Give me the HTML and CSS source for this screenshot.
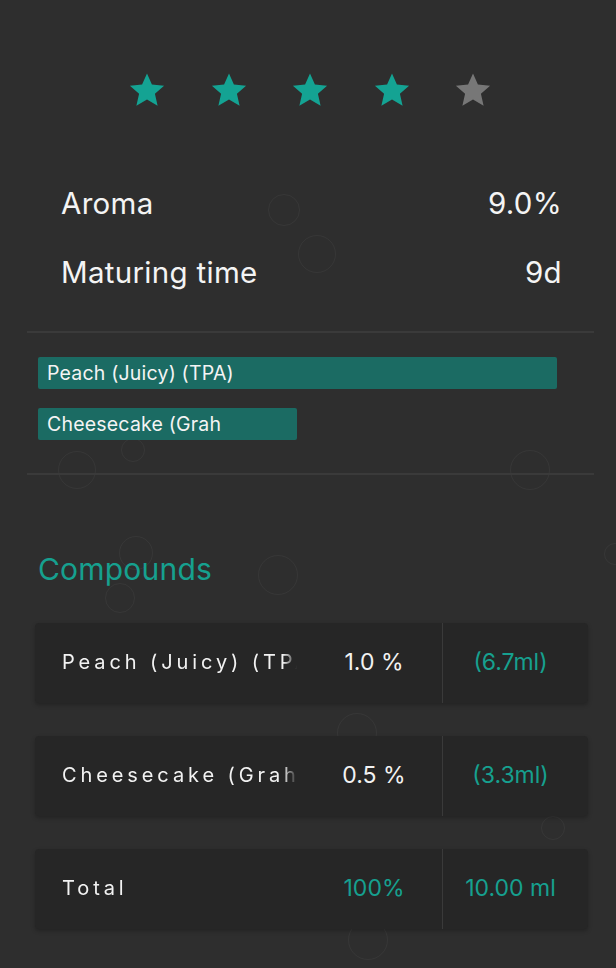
FILE: index.html
```html
<!DOCTYPE html>
<html>
<head>
<meta charset="utf-8">
<link rel="stylesheet" href="styles.css">
</head>
<body>
<div class="page">
  <div class="bubbles">
    <span class="bubble" style="left:268px;top:194px;width:32px;height:32px"></span>
    <span class="bubble" style="left:298px;top:235px;width:38px;height:38px"></span>
    <span class="bubble" style="left:58px;top:451px;width:38px;height:38px"></span>
    <span class="bubble" style="left:121px;top:438px;width:24px;height:24px"></span>
    <span class="bubble" style="left:119px;top:536px;width:34px;height:34px"></span>
    <span class="bubble" style="left:105px;top:583px;width:30px;height:30px"></span>
    <span class="bubble" style="left:258px;top:555px;width:40px;height:40px"></span>
    <span class="bubble" style="left:337px;top:713px;width:40px;height:40px"></span>
    <span class="bubble" style="left:348px;top:920px;width:40px;height:40px"></span>
    <span class="bubble" style="left:510px;top:450px;width:40px;height:40px"></span>
    <span class="bubble" style="left:541px;top:816px;width:24px;height:24px"></span>
    <span class="bubble" style="left:604px;top:543px;width:22px;height:22px"></span>
  </div>

  <div class="stars">
    <svg class="star on" viewBox="0 0 24 24"><polygon points="12,1.5 15.1,8.6 22.8,9.3 17,14.4 18.7,22 12,18 5.3,22 7,14.4 1.2,9.3 8.9,8.6"/></svg>
    <svg class="star on" viewBox="0 0 24 24"><polygon points="12,1.5 15.1,8.6 22.8,9.3 17,14.4 18.7,22 12,18 5.3,22 7,14.4 1.2,9.3 8.9,8.6"/></svg>
    <svg class="star on" viewBox="0 0 24 24"><polygon points="12,1.5 15.1,8.6 22.8,9.3 17,14.4 18.7,22 12,18 5.3,22 7,14.4 1.2,9.3 8.9,8.6"/></svg>
    <svg class="star on" viewBox="0 0 24 24"><polygon points="12,1.5 15.1,8.6 22.8,9.3 17,14.4 18.7,22 12,18 5.3,22 7,14.4 1.2,9.3 8.9,8.6"/></svg>
    <svg class="star off" viewBox="0 0 24 24"><polygon points="12,1.5 15.1,8.6 22.8,9.3 17,14.4 18.7,22 12,18 5.3,22 7,14.4 1.2,9.3 8.9,8.6"/></svg>
  </div>

  <div class="info">
    <div class="info-row"><span>Aroma</span><span>9.0%</span></div>
    <div class="info-row"><span>Maturing time</span><span>9d</span></div>
  </div>

  <div class="divider"></div>

  <div class="bars">
    <div class="bar" style="width:519px">Peach (Juicy) (TPA)</div>
    <div class="bar" style="width:259px">Cheesecake (Grah</div>
  </div>

  <div class="divider"></div>

  <h2 class="section-title">Compounds</h2>

  <div class="cards">
    <div class="card">
      <div class="name">Peach (Juicy) (TPA)</div>
      <div class="pct">1.0 %</div>
      <div class="ml">(6.7ml)</div>
    </div>
    <div class="card">
      <div class="name">Cheesecake (Graham</div>
      <div class="pct">0.5 %</div>
      <div class="ml">(3.3ml)</div>
    </div>
    <div class="card">
      <div class="name">Total</div>
      <div class="pct teal">100%</div>
      <div class="ml">10.00 ml</div>
    </div>
  </div>
</div>
</body>
</html>
```

FILE: styles.css
```css
html, body {
  margin: 0;
  padding: 0;
  background: #2e2e2e;
}
body {
  font-family: Inter, "Open Sans", "Liberation Sans", sans-serif;
  color: #f4f4f4;
  width: 616px;
  height: 968px;
  overflow: hidden;
}
.page {
  position: relative;
  padding-top: 71px;
}
.bubbles {
  position: absolute;
  left: 0;
  top: 0;
  width: 616px;
  height: 968px;
  pointer-events: none;
}
.bubble {
  position: absolute;
  border: 1.5px solid rgba(255, 255, 255, 0.045);
  border-radius: 50%;
  box-sizing: border-box;
}
.stars {
  display: flex;
  justify-content: flex-start;
  gap: 43.5px;
  padding-left: 128px;
  height: 38px;
  position: relative;
}
.star {
  width: 38px;
  height: 38px;
}
.star.on polygon { fill: #14a393; }
.star.off polygon { fill: #777777; }

.info {
  padding: 59px 54px 0 61px;
  position: relative;
}
.info-row {
  display: flex;
  justify-content: space-between;
  align-items: center;
  height: 69px;
  font-size: 29.5px;
  line-height: 34px;
  letter-spacing: 0.3px;
}
.divider {
  height: 2px;
  background: #3a3a3a;
  margin: 0 22px 0 27px;
  position: relative;
}
.info + .divider { margin-top: 25px; }
.bars {
  padding: 24px 0 33px 38px;
  display: flex;
  flex-direction: column;
  gap: 19px;
  position: relative;
}
.bar {
  height: 32px;
  background: #1b6b63;
  border-radius: 2px;
  box-sizing: border-box;
  padding-left: 9px;
  font-size: 19.5px;
  line-height: 33px;
  letter-spacing: 0.2px;
  color: #f4f4f4;
  white-space: nowrap;
  overflow: hidden;
}
.section-title {
  margin: 0;
  padding: 76px 0 0 38px;
  font-weight: 400;
  font-size: 30px;
  line-height: 36px;
  letter-spacing: 0.2px;
  color: #16a08f;
  position: relative;
}
.cards {
  padding: 36px 28px 0 35px;
  display: flex;
  flex-direction: column;
  gap: 33px;
  position: relative;
}
.card {
  display: grid;
  grid-template-columns: 271px 136px 1fr;
  height: 80px;
  background: #262626;
  border-radius: 4px;
  box-shadow: 0 2px 4px rgba(0, 0, 0, 0.25);
  align-items: stretch;
}
.card > div {
  display: flex;
  align-items: center;
  padding-bottom: 3px;
}
.name {
  padding-left: 27px;
  font-size: 20px;
  letter-spacing: 3.9px;
  white-space: nowrap;
  overflow: hidden;
  color: #f2f2f2;
  -webkit-mask-image: linear-gradient(to right, #000 248px, transparent 262px);
  mask-image: linear-gradient(to right, #000 248px, transparent 262px);
}
.pct {
  justify-content: center;
  font-size: 23px;
  color: #f2f2f2;
}
.pct.teal { color: #16a08f; }
.ml {
  justify-content: center;
  padding-right: 10px;
  border-left: 1px solid #3a3a3a;
  font-size: 23px;
  color: #16a08f;
}
```
